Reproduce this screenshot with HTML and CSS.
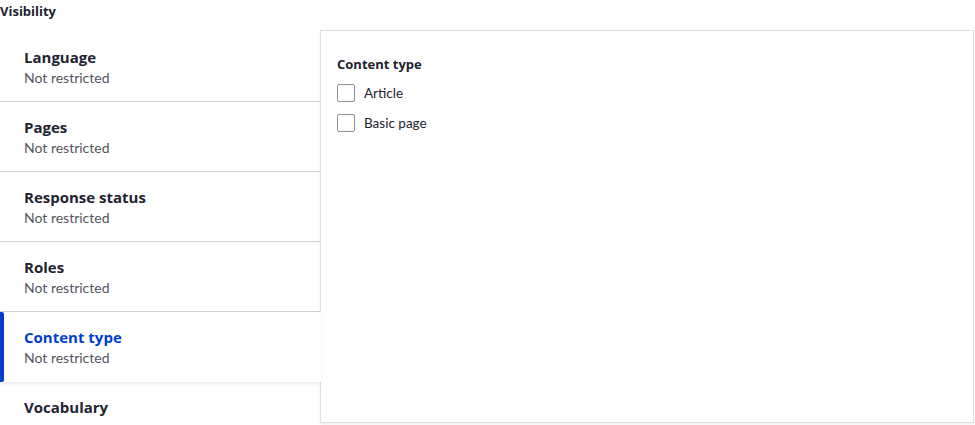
FILE: index.html
```html
<!DOCTYPE html>
<html>
<head>
<meta charset="utf-8">
<link rel="stylesheet" href="styles.css">
</head>
<body>
<div class="page">
  <div class="section-title">Visibility</div>
  <div class="vtabs">
    <ul class="vtabs-menu">
      <li class="vtab"><span class="vtab-title">Language</span><span class="vtab-summary">Not restricted</span></li>
      <li class="vtab"><span class="vtab-title">Pages</span><span class="vtab-summary">Not restricted</span></li>
      <li class="vtab"><span class="vtab-title">Response status</span><span class="vtab-summary">Not restricted</span></li>
      <li class="vtab"><span class="vtab-title">Roles</span><span class="vtab-summary">Not restricted</span></li>
      <li class="vtab is-active"><span class="vtab-title">Content type</span><span class="vtab-summary">Not restricted</span></li>
      <li class="vtab is-last"><span class="vtab-title">Vocabulary</span></li>
    </ul>
    <div class="vtabs-pane">
      <div class="field-label">Content type</div>
      <label class="check-row"><span class="checkbox"></span><span class="check-label">Article</span></label>
      <label class="check-row"><span class="checkbox"></span><span class="check-label">Basic page</span></label>
    </div>
  </div>
</div>
</body>
</html>
```

FILE: styles.css
```css
html, body {
  margin: 0;
  padding: 0;
  background: #fff;
  overflow: hidden;
}
body {
  font-family: Lato, "Noto Sans", sans-serif;
  color: #222330;
  width: 975px;
  height: 425px;
}
.section-title {
  font-family: "Open Sans", sans-serif;
  font-size: 13px;
  font-weight: 700;
  line-height: 22px;
  height: 22px;
}
.vtabs {
  display: flex;
  margin-top: 8px;
  align-items: flex-start;
}
.vtabs-menu {
  list-style: none;
  margin: 0;
  padding: 2px 0 0 0;
  width: 320px;
  flex: 0 0 320px;
}
.vtab {
  position: relative;
  display: flex;
  flex-direction: column;
  padding: 15px 24px 14px 24px;
  height: 40px;
  border-bottom: 1px solid #d3d4d9;
  background: #fff;
}
.vtab-title {
  font-family: "Open Sans", sans-serif;
  font-size: 15px;
  font-weight: 700;
  line-height: 20px;
  color: #222330;
}
.vtab-summary {
  font-size: 14px;
  line-height: 22px;
  color: #545560;
}
.vtab.is-active {
  z-index: 2;
  margin-right: -1px;
  border-bottom: 0;
  height: 41px;
  box-shadow: 0 2px 3px rgba(0, 0, 0, 0.08);
}
.vtab.is-last {
  border-bottom: 0;
  height: auto;
  padding-bottom: 0;
}
.vtab.is-active::before {
  content: "";
  position: absolute;
  left: 0;
  top: 0;
  bottom: 0;
  width: 4px;
  background: #003ecc;
  border-radius: 0 2px 2px 0;
}
.vtab.is-active .vtab-title {
  color: #003ecc;
}
.vtabs-pane {
  flex: 1;
  margin-right: 1px;
  height: 367px;
  border: 1px solid #dedfe4;
  box-shadow: 0 1px 3px rgba(0, 0, 0, 0.08);
  padding: 24px 16px 0 16px;
  position: relative;
  z-index: 1;
  background: #fff;
}
.field-label {
  font-family: "Open Sans", sans-serif;
  font-size: 13px;
  font-weight: 700;
  line-height: 20px;
  margin-top: -1px;
  margin-bottom: 4px;
}
.check-row {
  display: flex;
  align-items: center;
  height: 30px;
  gap: 9px;
}
.checkbox {
  width: 16px;
  height: 16px;
  border: 1px solid #8e929c;
  border-radius: 2px;
  background: #fff;
}
.check-label {
  font-size: 13.5px;
  color: #222330;
}
```
